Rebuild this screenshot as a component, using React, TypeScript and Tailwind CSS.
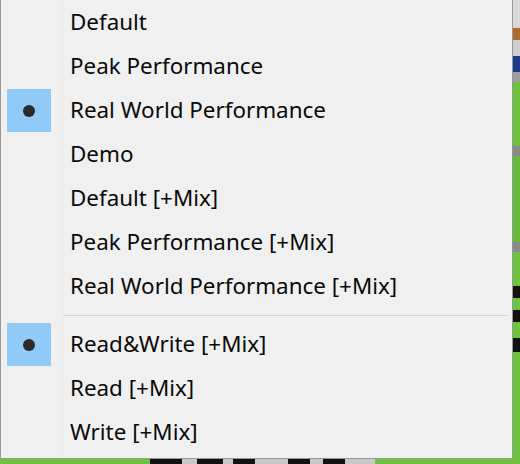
import React from 'react';

type Item = { label: string; checked?: boolean };

const groupA: Item[] = [
  { label: 'Default' },
  { label: 'Peak Performance' },
  { label: 'Real World Performance', checked: true },
  { label: 'Demo' },
  { label: 'Default [+Mix]' },
  { label: 'Peak Performance [+Mix]' },
  { label: 'Real World Performance [+Mix]' },
];

const groupB: Item[] = [
  { label: 'Read&Write [+Mix]', checked: true },
  { label: 'Read [+Mix]' },
  { label: 'Write [+Mix]' },
];

const MenuRow: React.FC<{ item: Item }> = ({ item }) => (
  <div className="flex items-center h-[44px]">
    <div className="w-[62px] h-full flex items-center">
      {item.checked && (
        <div className="ml-[6px] w-[44px] h-[43px] mt-[1px] bg-[#91c9f7] flex items-center justify-center">
          <div className="w-[12px] h-[12px] rounded-full bg-[#2b2b2b]" />
        </div>
      )}
    </div>
    <span className="pl-[7px] text-[22.4px] text-[#0a0a0a] leading-none">{item.label}</span>
  </div>
);

export default function App() {
  return (
    <div
      className="w-[520px] h-[464px] bg-[#9a9a9a] flex flex-col overflow-hidden"
      style={{ fontFamily: '"Noto Sans", "Open Sans", sans-serif' }}
    >
      <div className="flex h-[459px]">
        <div className="relative w-[513px] h-full bg-[#f0f0f0] border-l border-r border-b border-[#979797]">
          <div className="absolute left-[61px] top-0 bottom-0 w-px bg-[#ebebeb]" />
          <div className="flex flex-col">
            {groupA.map((it) => (
              <MenuRow key={it.label} item={it} />
            ))}
            <div className="h-[14px] flex items-center pl-[62px] pr-[4px]">
              <div className="h-px w-full bg-[#d7d7d7]" />
            </div>
            {groupB.map((it) => (
              <MenuRow key={it.label} item={it} />
            ))}
          </div>
        </div>
        <div className="flex-1 flex flex-col bg-[#b5b5b5]">
          <div className="h-[28px] bg-[#d8d8d8]" />
          <div className="h-[12px] bg-[#b06a2a]" />
          <div className="h-[16px] bg-[#cfcfcf]" />
          <div className="h-[16px] bg-[#1d3b8a]" />
          <div className="h-[10px] bg-[#a0a0a0]" />
          <div className="h-[64px] bg-[#6ec23f]" />
          <div className="h-[10px] bg-[#8a8a8a]" />
          <div className="h-[86px] bg-[#66bb3a]" />
          <div className="h-[10px] bg-[#8a8a8a]" />
          <div className="h-[34px] bg-[#6ec23f]" />
          <div className="h-[12px] bg-[#111]" />
          <div className="h-[12px] bg-[#6ec23f]" />
          <div className="h-[12px] bg-[#111]" />
          <div className="h-[16px] bg-[#6ec23f]" />
          <div className="h-[14px] bg-[#111]" />
          <div className="flex-1 bg-[#6ec23f]" />
        </div>
      </div>
      <div className="flex-1 flex bg-[#c9c9c9]">
        <div className="w-[150px] bg-[#6ec23f]" />
        <div className="w-[32px] bg-[#111]" />
        <div className="w-[15px]" />
        <div className="w-[26px] bg-[#111]" />
        <div className="w-[10px]" />
        <div className="w-[22px] bg-[#111]" />
        <div className="w-[33px]" />
        <div className="w-[22px] bg-[#111]" />
        <div className="w-[13px]" />
        <div className="w-[22px] bg-[#111]" />
        <div className="w-[30px]" />
        <div className="flex-1 bg-[#6ec23f]" />
      </div>
    </div>
  );
}
